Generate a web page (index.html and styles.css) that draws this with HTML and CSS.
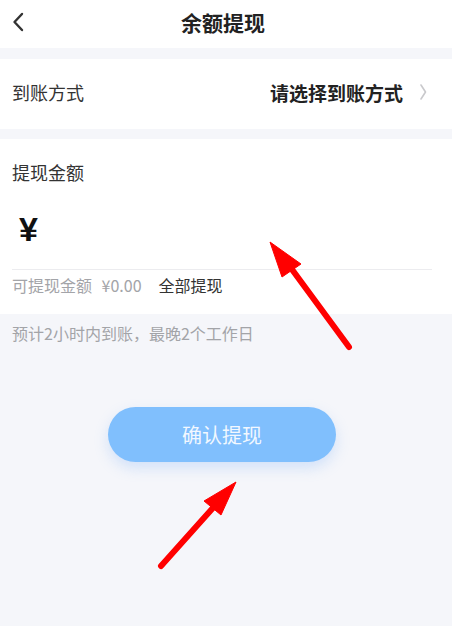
FILE: index.html
```html
<!DOCTYPE html>
<html lang="zh-CN">
<head>
  <meta charset="UTF-8">
  <title>余额提现</title>
  <link rel="stylesheet" href="styles.css">
</head>
<body>
  <div class="page">
    <header class="nav">
      <svg class="nav-back" width="12" height="20" viewBox="0 0 12 20">
        <path d="M10 2 L2.5 10 L10 18" fill="none" stroke="#333" stroke-width="2.4" stroke-linecap="round" stroke-linejoin="round"/>
      </svg>
      <h1 class="nav-title">余额提现</h1>
    </header>

    <div class="cell">
      <span class="cell-label">到账方式</span>
      <span class="cell-value">请选择到账方式</span>
      <svg class="cell-arrow" width="7" height="16" viewBox="0 0 7 16">
        <path d="M1 1 L5.5 8 L1 15" fill="none" stroke="#c9c9cc" stroke-width="1.6" stroke-linecap="round" stroke-linejoin="round"/>
      </svg>
    </div>

    <section class="amount-card">
      <div class="card-title">提现金额</div>
      <div class="amount-input">
        <span class="currency">¥</span>
      </div>
      <div class="balance-row">
        <span class="balance">可提现金额 ¥0.00</span>
        <span class="withdraw-all">全部提现</span>
      </div>
    </section>

    <p class="tip">预计2小时内到账，最晚2个工作日</p>

    <div class="actions">
      <button class="submit-btn">确认提现</button>
    </div>

    <!-- red hint arrows drawn over the form -->
    <svg class="hints" width="452" height="626" viewBox="0 0 452 626">
      <g fill="#ff0000" stroke="#ff0000">
        <line x1="349" y1="347" x2="288" y2="264" stroke-width="6" stroke-linecap="round"/>
        <polygon points="270,242 301,264 282,277" stroke-width="1" stroke-linejoin="round"/>
        <line x1="161" y1="566" x2="220" y2="500" stroke-width="6" stroke-linecap="round"/>
        <polygon points="236,482 221,515 204,501" stroke-width="1" stroke-linejoin="round"/>
      </g>
    </svg>
  </div>
</body>
</html>
```

FILE: styles.css
```css
* { box-sizing: border-box; }
body {
  margin: 0;
  background: #f5f6fa;
  font-family: "Noto Sans CJK SC", "Noto Sans", sans-serif;
  color: #333;
}
.page {
  position: relative;
  width: 452px;
  min-height: 626px;
  background: #f5f6fa;
}
.nav {
  position: relative;
  height: 48px;
  padding-bottom: 4px;
  background: #fff;
  display: flex;
  align-items: center;
  justify-content: center;
}
.nav-back {
  position: absolute;
  left: 12px;
  top: 12px;
}
.nav-title {
  margin: 0 6px 0 0;
  font-size: 21px;
  font-weight: 700;
  color: #222;
  line-height: 28px;
}
.cell {
  margin-top: 11px;
  height: 70px;
  padding: 0 25px 4px 12px;
  background: #fff;
  display: flex;
  align-items: center;
}
.cell-label {
  flex: 1;
  font-size: 18px;
  color: #333;
}
.cell-value {
  font-size: 19px;
  font-weight: 700;
  color: #222;
  margin-right: 17px;
}
.amount-card {
  margin-top: 10px;
  padding: 21px 20px 19px 12px;
  background: #fff;
}
.card-title {
  font-size: 18px;
  line-height: 24px;
  color: #333;
}
.amount-input {
  height: 86px;
  padding: 5px 0 0 7px;
  border-bottom: 1px solid #ececef;
  display: flex;
  align-items: center;
}
.currency {
  font-family: "Liberation Sans", Arial, sans-serif;
  font-size: 34px;
  font-weight: 700;
  color: #111;
}
.balance-row {
  padding-top: 5px;
  line-height: 20px;
  font-size: 16px;
  display: flex;
  gap: 17px;
}
.balance {
  color: #a3a4a8;
  word-spacing: 6px;
}
.withdraw-all {
  color: #333;
}
.tip {
  margin: 0;
  padding: 9px 12px 0;
  font-size: 16px;
  line-height: 20px;
  color: #a3a4a8;
}
.actions {
  display: flex;
  justify-content: center;
  margin-top: 64px;
  padding-right: 8px;
}
.submit-btn {
  width: 228px;
  height: 55px;
  border: none;
  border-radius: 28px;
  background: #80bffd;
  color: #f2f8ff;
  font-family: inherit;
  font-size: 20px;
  box-shadow: 0 6px 14px rgba(128, 180, 250, 0.3);
}
.hints {
  position: absolute;
  left: 0;
  top: 0;
  pointer-events: none;
}
```
